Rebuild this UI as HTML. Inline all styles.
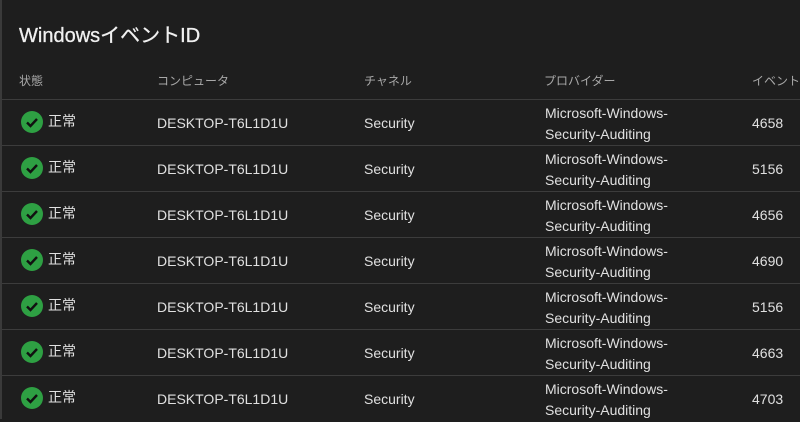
<!DOCTYPE html>
<html><head><meta charset="utf-8"><style>
html,body{margin:0;padding:0;background:#1e1e1e;width:800px;height:419px;overflow:hidden;font-family:"Liberation Sans","Noto Sans CJK JP",sans-serif;color:#e0e0e0}
.lb{position:absolute;left:0;top:0;width:2px;height:419px;background:#3a3a3a}
h1{position:absolute;left:19px;top:19px;margin:0;font-size:20px;font-weight:normal;color:#f0f0f0;-webkit-text-stroke:0.3px #f0f0f0}
.hd{position:absolute;top:72px;font-size:12px;color:#a8a8a8}
.row{position:absolute;left:2px;width:798px;height:46px;border-top:1px solid #3c3c3c}
.c{position:absolute;font-size:14px;top:15px}
.j{top:11px}
.p{position:absolute;left:543px;top:3px;font-size:14px;line-height:21px}
.ck{position:absolute;left:19px;top:11px;width:22px;height:22px;border-radius:50%;background:#2ea043}
</style></head><body>
<div class="lb"></div>
<h1>WindowsイベントID</h1>
<div class="hd" style="left:19px">状態</div>
<div class="hd" style="left:157px">コンピュータ</div>
<div class="hd" style="left:364px">チャネル</div>
<div class="hd" style="left:544px">プロバイダー</div>
<div class="hd" style="left:752px">イベント</div>
<div id="rows"></div>
<script>
var ids=[4658,5156,4656,4690,5156,4663,4703],h='';
ids.forEach(function(id,i){var t=99+i*46;
h+='<div class="row" style="top:'+t+'px"><div class="ck"><svg width="22" height="22" viewBox="0 0 22 22"><path d="M6 11.5l3.5 3.5 6.5-7" fill="none" stroke="#111" stroke-width="2.4"/></svg></div><div class="c j" style="left:46px">正常</div><div class="c" style="left:155px">DESKTOP-T6L1D1U</div><div class="c" style="left:362px">Security</div><div class="p">Microsoft-Windows-<br>Security-Auditing</div><div class="c" style="left:750px">'+id+'</div></div>';});
document.getElementById('rows').innerHTML=h;
</script>
</body></html>
